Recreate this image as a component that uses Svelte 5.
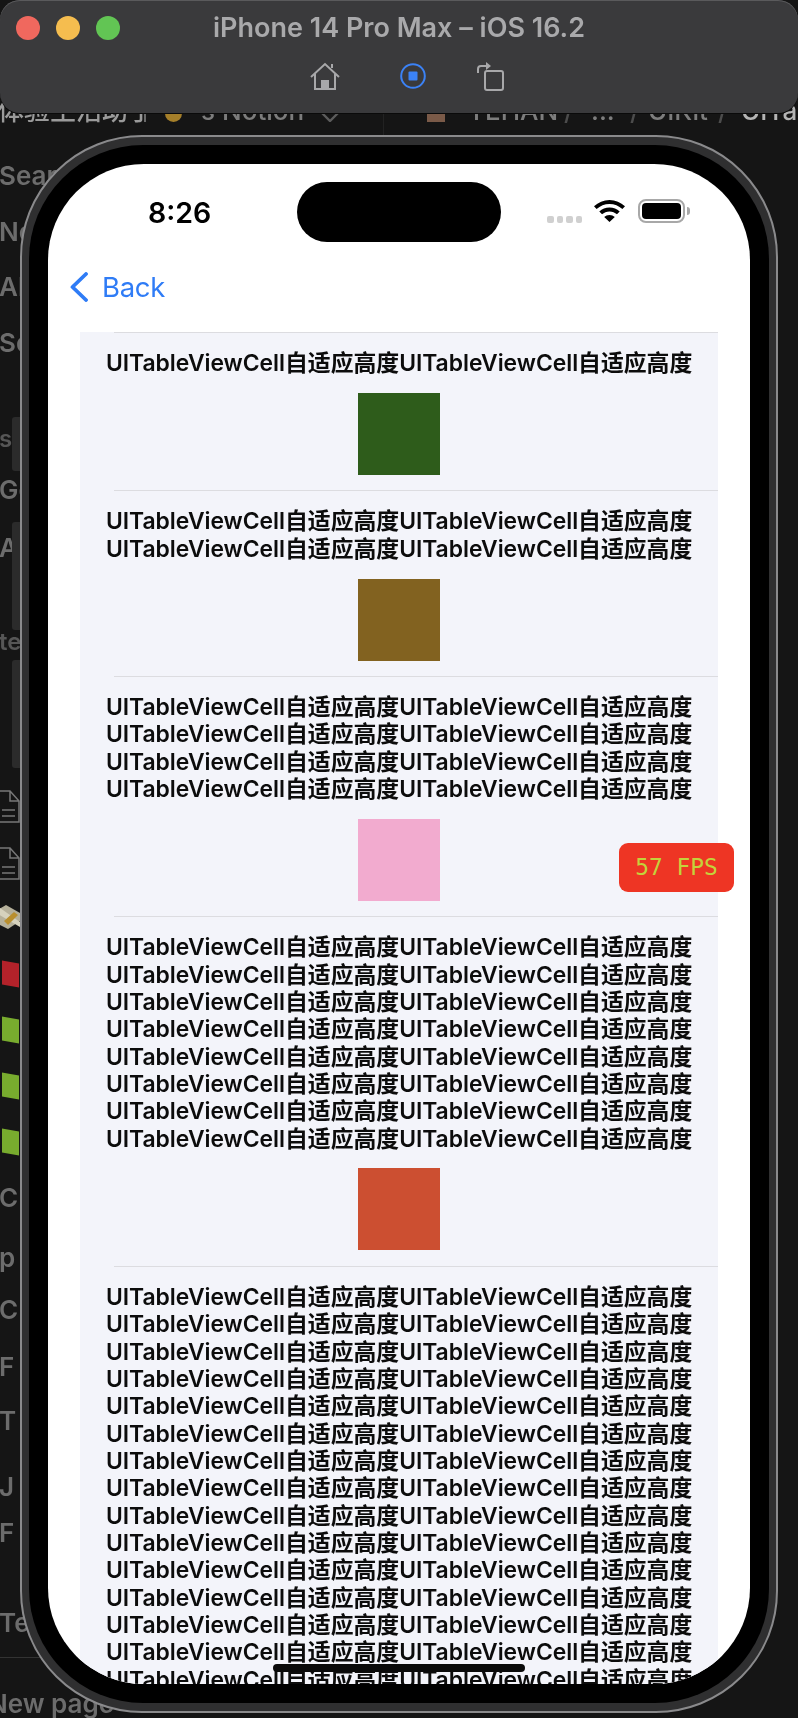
<script>
  const cells = [
    { lines: 1, color: '#2e5c1b' },
    { lines: 2, color: '#826220' },
    { lines: 4, color: '#f2abcf' },
    { lines: 8, color: '#cc4f31' },
    { lines: 15, color: null }
  ];
  const ghost = [
    { t: 'Sear', y: 160 }, { t: 'No', y: 216 }, { t: 'Al', y: 271 }, { t: 'Se', y: 327 },
    { t: 's', y: 423, small: true }, { t: 'Ge', y: 474 }, { t: 'A', y: 532 }, { t: 'te', y: 626, small: true },
    { t: 'C', y: 1182 }, { t: 'p', y: 1242 }, { t: 'C', y: 1294 }, { t: 'F', y: 1351 },
    { t: 'T', y: 1405 }, { t: 'J', y: 1471 }, { t: 'F', y: 1517 }
  ];
  const books = [
    { y: 962, c: '#b3222a' }, { y: 1018, c: '#78ab2e' }, { y: 1074, c: '#78ab2e' }, { y: 1130, c: '#78ab2e' }
  ];
</script>

<div class="desktop">
  <div class="behind">
    <div class="crumbs">
      <span class="c-a">体验生活助手</span><i class="bar"></i><i class="coin"></i><span class="c-b">'s Notion</span>
      <svg class="c-chev" viewBox="0 0 18 10" fill="none" stroke="#5c5c5c" stroke-width="2.4"><path d="M1 1l8 8 8-8"/></svg>
      <i class="divider"></i>
      <i class="favicon"></i>
      <span class="c-c" style="left:468px">TEHAN</span>
      <span class="c-s" style="left:564px">/</span>
      <span class="c-c" style="left:591px">...</span>
      <span class="c-s" style="left:630px">/</span>
      <span class="c-c" style="left:648px">UIKit</span>
      <span class="c-s" style="left:718px">/</span>
      <span class="c-d" style="left:741px">UITa</span>
    </div>
    {#each ghost as g}
      <span class="ghost" class:small={g.small} style="top:{g.y}px">{g.t}</span>
    {/each}
    <i class="field f1"></i><i class="field f2"></i><i class="field f3"></i>
    <svg class="doc d1" viewBox="0 0 20 33"><path d="M-2 1H10L19 11V32H-2M10 1V11H19M2 20H15M2 26H15" /></svg>
    <svg class="doc d2" viewBox="0 0 20 33"><path d="M-2 1H10L19 11V32H-2M10 1V11H19M2 20H15M2 26H15" /></svg>
    <svg class="money" viewBox="0 0 20 26">
      <path d="M-4 6 6 0l14 8v8L8 24-4 18z" fill="#b5b09a"/>
      <path d="M0 3l20 14v5L-2 9z" fill="#d6d2bd"/>
      <path d="M4 16l10-9 4 3-10 10z" fill="#b98f2e"/>
    </svg>
    {#each books as b}
      <i class="book" style="top:{b.y}px;background:{b.c}"></i>
    {/each}
    <span class="ghost te">Te</span>
    <i class="rule"></i>
    <span class="ghost np">New page</span>
  </div>

  <header class="toolbar">
    <div class="lights"><i class="r"></i><i class="y"></i><i class="g"></i></div>
    <div class="title">iPhone 14 Pro Max – iOS 16.2</div>
    <div class="tools">
      <svg class="i-home" viewBox="0 0 30 28" fill="none" stroke="#a8a8aa" stroke-width="2"><path d="M1 15 15 2l14 13M22 6V2M5 12v15h20V12"/><path d="M11 27V18h8v9z" fill="#a8a8aa" stroke="none"/></svg>
      <svg class="i-rec" viewBox="0 0 26 26"><circle cx="13" cy="13" r="11.8" fill="none" stroke="#3b82f6" stroke-width="2"/><rect x="8.5" y="8.5" width="9" height="9" rx="1" fill="#3b82f6"/></svg>
      <svg class="i-rot" viewBox="0 0 28 29" fill="none" stroke="#a8a8aa" stroke-width="2"><rect x="8" y="9" width="18" height="19" rx="2"/><path d="M1 11V7a3 3 0 0 1 3-3h5"/><path d="M9 0l5 4-5 4z" fill="#a8a8aa" stroke="none"/></svg>
    </div>
  </header>

  <div class="phone">
    <div class="bezel">
      <div class="screen">
        <div class="status">
          <span class="time">8:26</span>
          <div class="island"></div>
          <div class="indicators">
            <div class="dots"><i></i><i></i><i></i><i></i></div>
            <svg class="wifi" viewBox="0 0 31 22"><path d="M15.5 0C9.5 0 4.3 2.3 0 6.3l2.6 2.8C6.2 5.7 10.6 3.9 15.5 3.9s9.3 1.8 12.9 5.2L31 6.3C26.7 2.3 21.5 0 15.5 0z"/><path d="M15.5 7.5c-4 0-7.4 1.5-10.2 4l2.7 2.8c2.1-1.9 4.6-2.9 7.5-2.9s5.4 1 7.5 2.9l2.7-2.8c-2.8-2.5-6.2-4-10.2-4z"/><path d="M15.5 15c-2.1 0-3.8.7-5.3 2l5.3 5 5.3-5c-1.5-1.3-3.2-2-5.3-2z"/></svg>
            <div class="battery"><i></i></div>
          </div>
        </div>
        <nav class="navbar">
          <svg class="chev" viewBox="0 0 18 30" fill="none" stroke="#2f7cf6" stroke-width="3.8" stroke-linecap="round" stroke-linejoin="round"><path d="M16 2 2.5 15 16 28"/></svg>
          <span class="back">Back</span>
        </nav>
        <div class="table">
          {#each cells as cell}
            <div class="sep"></div>
            <div class="cell">
              <div class="label">
                {#each Array(cell.lines) as _}
                  <div class="line">UITableViewCell自适应高度UITableViewCell自适应高度</div>
                {/each}
              </div>
              {#if cell.color}
                <div class="swatch" style="background:{cell.color}"></div>
              {/if}
            </div>
          {/each}
        </div>
        <div class="fps">57 FPS</div>
        <div class="home-bar"></div>
      </div>
    </div>
  </div>
</div>

<style>
  :global(body) { margin: 0; background: #151515; }
  i { display: block; }

  .desktop {
    position: relative;
    width: 798px;
    height: 1718px;
    overflow: hidden;
    background: #151515;
    font-family: Inter, "Noto Sans CJK SC", sans-serif;
  }

  /* window behind the simulator */
  .behind { position: absolute; inset: 0; filter: blur(0.4px); }
  .crumbs {
    position: absolute; left: 0; right: 0; top: 95px; height: 40px;
    color: #8a8a8a; font-size: 26px; font-weight: 500; white-space: nowrap; line-height: 32px;
  }
  .crumbs span { position: absolute; top: 0; }
  .c-a { left: -2px; color: #9a9a9a; }
  .bar { position: absolute; left: 144px; top: 17px; width: 2px; height: 10px; background: #6a6a6a; }
  .coin { position: absolute; left: 165px; top: 12px; width: 17px; height: 15px; border-radius: 0 0 9px 9px; background: #a57f2a; }
  .c-b { left: 193px; color: #7c7c7c; }
  .c-chev { position: absolute; left: 321px; top: 17px; width: 18px; height: 10px; }
  .divider { position: absolute; left: 383px; top: 18px; width: 1px; height: 22px; background: #222; }
  .favicon { position: absolute; left: 427px; top: 18px; width: 18px; height: 9px; background: #7a5a48; }
  .c-c { color: #7d7d7d; }
  .c-s { color: #4c4c4c; }
  .c-d { color: #b4b4b4; }
  .ghost {
    position: absolute; left: -1px; color: #6c6c6c; font-size: 26px; font-weight: 600; line-height: 32px;
  }
  .ghost.small { color: #565656; font-size: 24px; }
  .te { top: 1607px; }
  .np { top: 1688px; left: -12px; }
  .rule { position: absolute; left: 0; width: 60px; top: 1657px; height: 1px; background: #333; }
  .field { position: absolute; left: 12px; width: 10px; background: #2b2b2b; border-radius: 3px 0 0 3px; }
  .f1 { top: 417px; height: 54px; }
  .f2 { top: 522px; height: 108px; }
  .f3 { top: 660px; height: 108px; }
  .doc { position: absolute; left: 0; width: 20px; height: 33px; fill: none; stroke: #777; stroke-width: 1.5; }
  .d1 { top: 790px; }
  .d2 { top: 847px; }
  .money { position: absolute; left: 0; top: 905px; width: 20px; height: 26px; }
  .book { position: absolute; left: 2px; width: 17px; height: 24px; transform: skewY(10deg); }

  /* simulator toolbar */
  .toolbar {
    position: relative;
    height: 113px;
    box-sizing: border-box;
    padding-top: 16px;
    background: #3a3a3c;
    border-radius: 20px;
    box-shadow: inset 0 1px 0 #5a5a5c, 0 1px 0 #0a0a0a;
  }
  .lights { position: absolute; left: 16px; top: 16px; display: flex; gap: 16px; }
  .lights i { width: 24px; height: 24px; border-radius: 50%; }
  .r { background: #f0685e; }
  .y { background: #f5bd4f; }
  .g { background: #62c554; }
  .title {
    text-align: center; color: #a9a9ab; font-size: 27px; font-weight: 600; line-height: 23px;
    font-family: Inter, sans-serif;
  }
  .tools { position: relative; display: flex; justify-content: center; align-items: center; margin-top: 23px; height: 28px; }
  .i-home { position: absolute; left: 310px; top: 0; width: 30px; height: 28px; }
  .i-rec { position: absolute; left: 400px; top: 1px; width: 26px; height: 26px; }
  .i-rot { position: absolute; left: 477px; top: 0; width: 28px; height: 29px; }

  /* device */
  .phone {
    position: relative;
    margin: 22px 0 0 20px;
    width: 758px;
    height: 1578px;
    box-sizing: border-box;
    padding: 8px 7px;
    background: #2f2f30;
    border: 2px solid #8a8a8c;
    border-radius: 122px;
  }
  .bezel {
    height: 100%;
    box-sizing: border-box;
    padding: 19px;
    background: #000;
    border-radius: 114px;
  }
  .screen {
    position: relative;
    height: 100%;
    background: #fff;
    border-radius: 96px;
    overflow: hidden;
  }

  .status { position: relative; height: 78px; display: flex; align-items: flex-start; }
  .time {
    position: absolute; left: 100px; top: 31px; color: #000;
    font-size: 28.5px; font-weight: 600; line-height: 36px; font-family: Inter, sans-serif;
  }
  .island { position: absolute; left: 249px; top: 18px; width: 204px; height: 60px; border-radius: 30px; background: #000; }
  .indicators { position: absolute; left: 499px; top: 35px; display: flex; align-items: flex-start; }
  .dots { display: flex; gap: 3px; margin-top: 17px; }
  .dots i { width: 6.5px; height: 6.5px; border-radius: 2px; background: #d0d0d0; }
  .wifi { width: 31px; height: 22px; margin: 1px 0 0 12px; fill: #000; }
  .battery {
    position: relative; width: 47px; height: 24px; box-sizing: border-box; margin-left: 13px;
    border: 2px solid #a8a8a8; border-radius: 8px; padding: 2px;
  }
  .battery i { height: 100%; background: #000; border-radius: 4px; }
  .battery::after {
    content: ""; position: absolute; right: -7px; top: 6px; width: 3px; height: 8px;
    background: #a8a8a8; border-radius: 0 3px 3px 0;
  }

  .navbar { height: 90px; display: flex; align-items: center; padding-left: 22px; box-sizing: border-box; }
  .chev { width: 18px; height: 30px; }
  .back { margin-left: 14px; color: #2f7cf6; font-size: 27.5px; letter-spacing: -0.3px; line-height: 34px; font-family: Inter, sans-serif; }

  .table { margin: 0 32px; background: #f3f4fa; }
  .sep { height: 1px; margin-left: 34px; background: #dcdce0; }
  .cell { padding: 17.2px 0 15.2px 26px; }
  .label { font-size: 22.86px; letter-spacing: -0.03px; line-height: 27.35px; font-weight: 600; color: #0c0c0c; white-space: nowrap; }
  .swatch { width: 82px; height: 82px; margin: 15.5px 0 0 252px; }

  .fps {
    position: absolute; left: 571px; top: 679px; width: 115px; height: 49px;
    border-radius: 9px; background: #ee3524; color: #c4d23b;
    font: 22.86px/49px "DejaVu Sans Mono", monospace; text-align: center;
  }
  .home-bar {
    position: absolute; left: 225px; bottom: 12px; width: 252px; height: 8px;
    border-radius: 4px; background: #0a0a0a; filter: blur(0.5px);
  }
</style>
